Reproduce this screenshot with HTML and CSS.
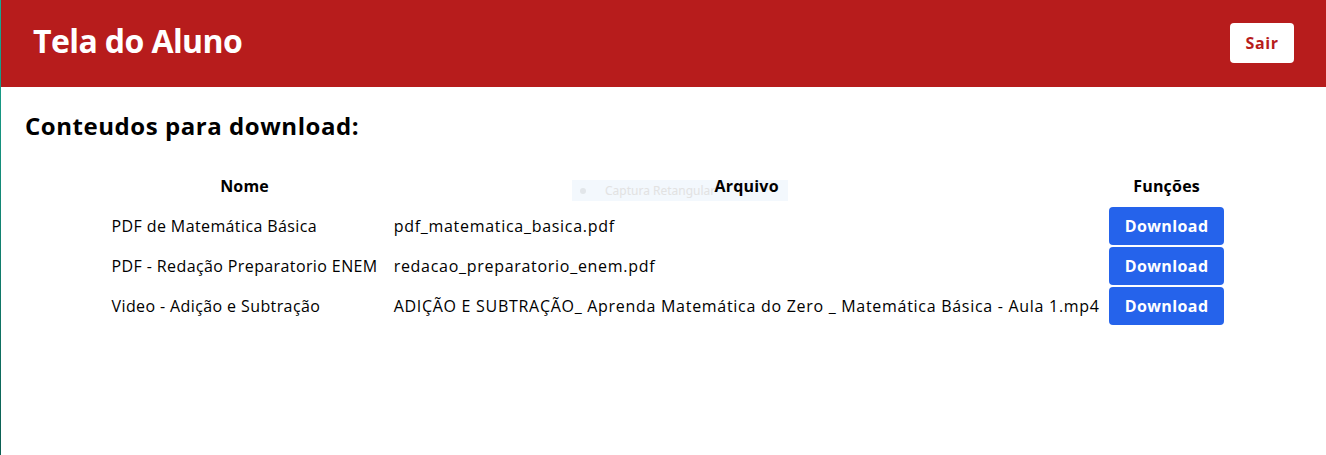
FILE: index.html
```html
<!DOCTYPE html>
<html lang="pt-BR">
<head>
<meta charset="utf-8">
<title>Tela do Aluno</title>
<link rel="stylesheet" href="styles.css">
</head>
<body>
<div class="edge"></div>
<header class="topbar">
  <h1 class="title">Tela do Aluno</h1>
  <button class="logout">Sair</button>
</header>
<main class="content">
  <h2 class="heading">Conteudos para download:</h2>
  <div class="snip"><span class="snip-dot"></span><span class="snip-text">Captura Retangular</span></div>
  <table class="files">
    <thead>
      <tr><th>Nome</th><th>Arquivo</th><th class="fn">Funções</th></tr>
    </thead>
    <tbody>
      <tr>
        <td class="name">PDF de Matemática Básica</td>
        <td class="file">pdf_matematica_basica.pdf</td>
        <td class="act"><button class="dl">Download</button></td>
      </tr>
      <tr>
        <td class="name">PDF - Redação Preparatorio ENEM</td>
        <td class="file">redacao_preparatorio_enem.pdf</td>
        <td class="act"><button class="dl">Download</button></td>
      </tr>
      <tr>
        <td class="name">Video - Adição e Subtração</td>
        <td class="file">ADIÇÃO E SUBTRAÇÃO_ Aprenda Matemática do Zero _ Matemática Básica - Aula 1.mp4</td>
        <td class="act"><button class="dl">Download</button></td>
      </tr>
    </tbody>
  </table>
</main>
</body>
</html>
```

FILE: styles.css
```css
* { box-sizing: border-box; }
html { background: #fff; }
html, body { margin: 0; padding: 0; }
body {
  font-family: "Open Sans", "Liberation Sans", sans-serif;
  color: #000;
  position: relative;
  min-height: 455px;
}
.edge {
  position: fixed;
  left: 0; top: 0;
  width: 1px; height: 100%;
  background: linear-gradient(#1aa891, #0b5e52);
  z-index: 5;
}
.topbar {
  height: 87px;
  background: #b71c1c;
  display: flex;
  align-items: center;
  justify-content: space-between;
  padding: 0 32px 0 33px;
}
.title {
  margin: 0 0 6px;
  color: #fff;
  font-size: 32px;
  font-weight: 700;
  letter-spacing: -0.6px;
}
.logout {
  width: 64px;
  height: 40px;
  border: 0;
  border-radius: 4px;
  background: #fff;
  color: #b71c1c;
  font-family: inherit;
  font-size: 16px;
  font-weight: 700;
  letter-spacing: 0.6px;
  margin-top: -1px;
}
.content {
  padding: 0 24px 0 27px;
  position: relative;
}
.heading {
  margin: 0 0 0 -2px;
  padding-top: 22px;
  font-size: 24px;
  font-weight: 700;
  letter-spacing: 0.55px;
}
.snip {
  position: absolute;
  left: 572px;
  top: 93px;
  width: 216px;
  height: 21px;
  background: #f3f8fd;
  display: flex;
  align-items: center;
  z-index: -1;
}
.snip-dot {
  width: 6px; height: 6px;
  border-radius: 50%;
  background: #e2e6ea;
  margin: 0 19px 0 8px;
}
.snip-text {
  font-family: "Noto Sans", sans-serif;
  font-size: 12px;
  color: #e2e2e2;
}
.files {
  margin: 32px auto 0;
  border-collapse: separate;
  border-spacing: 0;
  font-size: 16px;
}
.files th {
  font-weight: 700;
  text-align: center;
  padding: 1px 8px 9px;
  letter-spacing: 0.2px;
}
.files td {
  padding: 1px 8px;
  text-align: left;
}
.files td.name { letter-spacing: 0.39px; }
.files td.file { letter-spacing: 0.71px; }
.files td.act { padding: 1px; }
.files th.fn { padding-left: 1px; padding-right: 1px; }
.dl {
  display: block;
  height: 38px;
  padding: 0 16px;
  border: 0;
  border-radius: 4px;
  background: #2563eb;
  color: #fff;
  font-family: inherit;
  font-size: 16px;
  font-weight: 700;
  letter-spacing: 0.4px;
}
```
